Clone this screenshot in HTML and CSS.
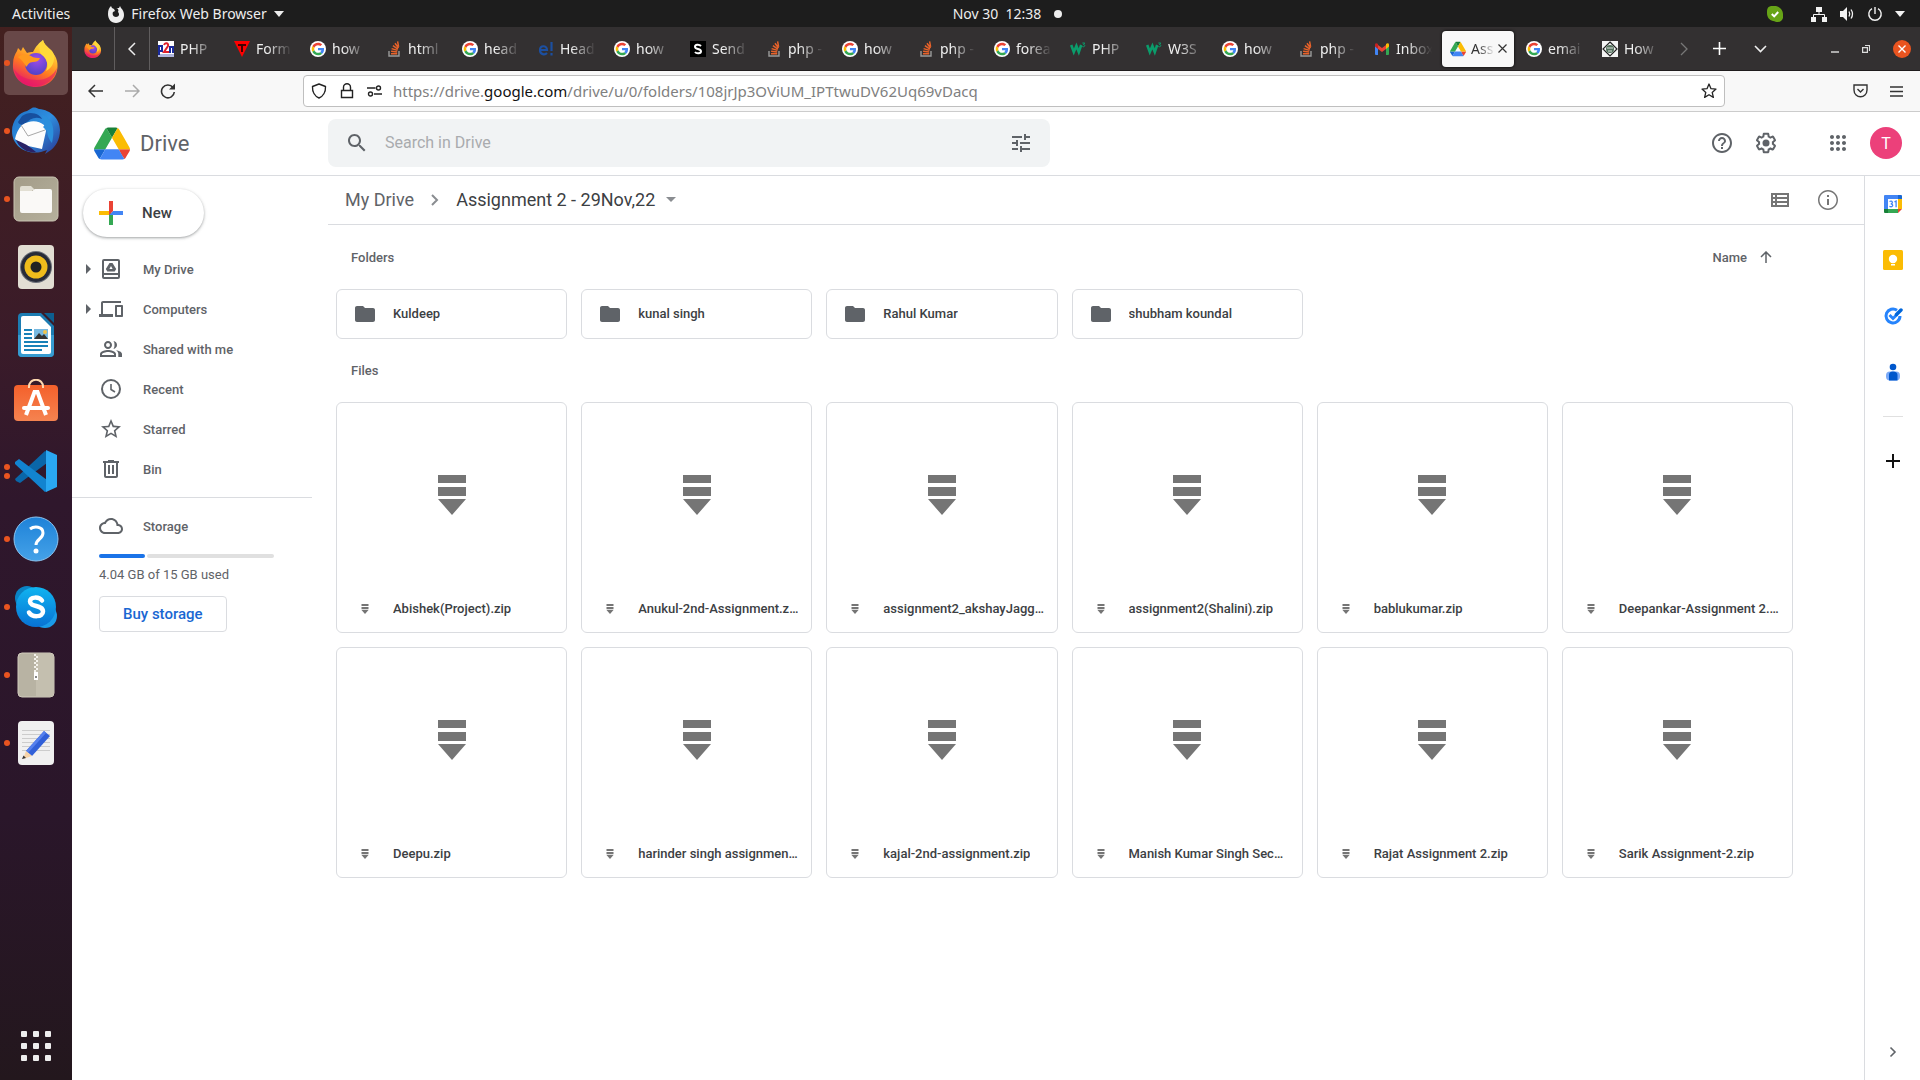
FILE: index.html
```
<!DOCTYPE html>
<html lang="en">
<head>
<meta charset="utf-8">
<title>Assignment 2 - 29Nov,22 - Google Drive</title>
<meta name="viewport" content="width=device-width, initial-scale=1">
<link rel="stylesheet" href="styles.css">
</head>
<body>
<svg class="defs" aria-hidden="true">
  <defs>
    <linearGradient id="fx-body" x1="0.8" y1="0" x2="0.3" y2="1"><stop offset="0" stop-color="#fff44f"/><stop offset=".3" stop-color="#ffbd2e"/><stop offset=".6" stop-color="#ff7a20"/><stop offset="1" stop-color="#e5126d"/></linearGradient>
    <radialGradient id="fx-core" cx=".55" cy=".3" r=".75"><stop offset="0" stop-color="#a04bea"/><stop offset="1" stop-color="#4a42c4"/></radialGradient>
    <linearGradient id="tb" x1="0" y1="0" x2="1" y2="1"><stop offset="0" stop-color="#1f6fc4"/><stop offset=".5" stop-color="#2e8fe0"/><stop offset="1" stop-color="#2a3590"/></linearGradient>
    <linearGradient id="orange" x1="0" y1="0" x2="0" y2="1"><stop offset="0" stop-color="#f4602b"/><stop offset="1" stop-color="#f58350"/></linearGradient>
    <linearGradient id="blue" x1="0" y1="0" x2="0" y2="1"><stop offset="0" stop-color="#1e82d8"/><stop offset="1" stop-color="#45a2e8"/></linearGradient>
    <linearGradient id="skype" x1="0" y1="0" x2="0" y2="1"><stop offset="0" stop-color="#10b4f0"/><stop offset="1" stop-color="#0872d4"/></linearGradient>
    <linearGradient id="taupe" x1="0" y1="0" x2="1" y2="1"><stop offset="0" stop-color="#a39c88"/><stop offset="1" stop-color="#b5b09c"/></linearGradient>
  </defs>
  <symbol id="i-firefox" viewBox="0 0 48 48">
    <path fill="url(#fx-body)" d="M31 1c1 5 4 7 7 11 4 2 6 6 7 10 3 14-7 26-21 26S0 38 1 25c0-6 2-10 4-13l1-3 3 3 2-4 4 6c2-1 4-1 6-1 3-6 6-9 10-12z"/>
    <path fill="#e5126d" opacity=".55" d="M2 30c3 11 12 17 22 17s20-7 21-18c-4 8-11 12-20 12S7 38 2 30z"/>
    <circle cx="24" cy="25" r="11" fill="url(#fx-core)"/>
    <path fill="#ff9a1f" d="M6 18c5-3 9-3 13-1 3 2 6 2 9 2-1 3-4 4-7 4-4 0-5 3-7 5-1-3-3-6-8-10z"/>
    <path fill="#ffd83a" d="M31 1c-4 5-5 11-1 15 5 4 7 10 4 16 6-3 9-9 8-16-1-6-9-8-11-15z"/>
  </symbol>
  <symbol id="i-google" viewBox="0 0 48 48">
    <circle cx="24" cy="24" r="24" fill="#fff"/>
    <g transform="translate(5 5) scale(.79)">
      <path fill="#EA4335" d="M24 9.5c3.54 0 6.71 1.22 9.21 3.6l6.85-6.85C35.9 2.38 30.47 0 24 0 14.62 0 6.51 5.38 2.56 13.22l7.98 6.19C12.43 13.72 17.74 9.5 24 9.5z"/>
      <path fill="#4285F4" d="M46.98 24.55c0-1.57-.15-3.09-.38-4.55H24v9.02h12.94c-.58 2.96-2.26 5.48-4.78 7.18l7.73 6c4.51-4.18 7.09-10.36 7.09-17.65z"/>
      <path fill="#FBBC05" d="M10.53 28.59c-.48-1.45-.76-2.99-.76-4.59s.27-3.14.76-4.59l-7.98-6.19C.92 16.46 0 20.12 0 24c0 3.88.92 7.54 2.56 10.78l7.97-6.19z"/>
      <path fill="#34A853" d="M24 48c6.48 0 11.93-2.13 15.89-5.81l-7.73-6c-2.15 1.45-4.92 2.3-8.16 2.3-6.26 0-11.57-4.22-13.47-9.91l-7.98 6.19C6.51 42.62 14.62 48 24 48z"/>
    </g>
  </symbol>
  <symbol id="i-stack" viewBox="0 0 16 16">
    <path fill="none" stroke="#9b9b9b" stroke-width="1.4" d="M3 10v5h10v-5"/>
    <path fill="none" stroke="#e8622a" stroke-width="1.5" d="M5 12.8h6.2M5.1 10.3l6.1.7M5.6 7.6l5.9 1.8M6.9 4.7l5 3.4M9 2.2l3.5 4.8M11.6.4l1 5.4"/>
  </symbol>
  <symbol id="i-drive" viewBox="0 0 87.3 78">
    <path fill="#1967d2" d="M6.6 66.85l3.85 6.65c.8 1.4 1.95 2.5 3.3 3.3L27.5 53H0c0 1.55.4 3.1 1.2 4.5z"/>
    <path fill="#34a853" d="M43.65 25L29.9 1.2c-1.35.8-2.5 1.9-3.3 3.3l-25.4 44A9.06 9.06 0 0 0 0 53h27.5z"/>
    <path fill="#ea4335" d="M73.55 76.8c1.35-.8 2.5-1.9 3.3-3.3l1.6-2.75 7.65-13.25c.8-1.4 1.2-2.95 1.2-4.5H59.8l5.85 11.5z"/>
    <path fill="#188038" d="M43.65 25L57.4 1.2C56.05.4 54.5 0 52.9 0H34.4c-1.6 0-3.15.45-4.5 1.2z"/>
    <path fill="#4285f4" d="M59.8 53H27.5L13.75 76.8c1.35.8 2.9 1.2 4.5 1.2h50.8c1.6 0 3.15-.45 4.5-1.2z"/>
    <path fill="#fbbc04" d="M73.4 26.5l-12.7-22c-.8-1.4-1.95-2.5-3.3-3.3L43.65 25 59.8 53h27.45c0-1.55-.4-3.1-1.2-4.5z"/>
  </symbol>
  <symbol id="i-w3" viewBox="0 0 16 16">
    <path fill="none" stroke="#0b9c6b" stroke-width="2.6" d="M1.2 4l2.6 7L6.4 5l2.4 6 2.4-7"/>
    <path fill="none" stroke="#0b9c6b" stroke-width="1" d="M12.4 2h2.4l-1.3 1.5c1.7 0 1.7 2.3-.2 2.3l-1-.3"/>
  </symbol>
  <symbol id="i-zip" viewBox="0 0 28 40">
    <path fill="#757575" d="M0 0h28v8H0zM0 12h28v9H0zM0 24h28L14 40z"/>
  </symbol>
  <symbol id="i-folder" viewBox="0 0 24 24">
    <path fill="#5f6368" d="M10 4H4c-1.1 0-1.99.9-1.99 2L2 18c0 1.1.9 2 2 2h16c1.1 0 2-.9 2-2V8c0-1.1-.9-2-2-2h-8l-2-2z"/>
  </symbol>
</svg>

<header class="topbar">
  <div class="topbar-left">
    <button class="plain">Activities</button>
    <button class="plain app-menu">
      <svg width="16" height="18" viewBox="0 0 16 18"><path fill="#eee" d="M8 3c2 0 3 2 2 4 2 2 1 5-2 5s-4-3-3-5l2-1-1-2-2-1-1-2C1 3 0 5 0 9c0 5 3 9 8 9s8-4 8-8c0-3-1-5-3-7l-1-2-1 2z"/></svg>
      <span>Firefox Web Browser</span>
      <svg width="10" height="6" viewBox="0 0 10 6"><path fill="#eee" d="M0 0h10L5 6z"/></svg>
    </button>
  </div>
  <button class="plain clock"><span>Nov 30&nbsp; 12:38</span><i class="dot"></i></button>
  <div class="topbar-right">
    <svg class="tray" width="16" height="16" viewBox="0 0 16 16"><path fill="#67a417" d="M4 0c2-1 3 0 5 0 4 1 7 4 7 8 1 4-1 8-5 8-2 0-3-.5-5-1-4-1-6-4-6-8C0 4 0 1 4 0z"/><path fill="none" stroke="#fff" stroke-width="2" d="M4.800 8l2.400 2.400 4-4.400"/></svg>
    <svg width="16" height="16" viewBox="0 0 16 16"><path fill="#f2f2f2" d="M5 1h6v5H5zM0 11h5v5H0zM11 11h5v5h-5z"/><path fill="none" stroke="#f2f2f2" d="M8 5v3.500M2.500 11V8.500h11V11"/></svg>
    <svg width="16" height="16" viewBox="0 0 16 16"><path fill="#f2f2f2" d="M1 5h3l4-4v14l-4-4H1z"/><path fill="none" stroke="#f2f2f2" stroke-width="1.300" d="M10 5.500q1.500 2.500 0 5M12 3.500q3 4.500 0 9"/></svg>
    <svg width="16" height="16" viewBox="0 0 16 16"><path fill="none" stroke="#f2f2f2" stroke-width="1.400" d="M8 1v7M5 2.600a6.200 6.200 0 1 0 6 0"/></svg>
    <svg width="10" height="6" viewBox="0 0 10 6"><path fill="#f2f2f2" d="M0 0h10L5 6z"/></svg>
  </div>
</header>

<div class="desktop">
<nav class="dock" aria-label="Dock">
  <button class="dock-item active one" aria-label="Firefox"><svg width="48" height="48"><use href="#i-firefox"/></svg></button>
  <button class="dock-item one" aria-label="Thunderbird"><svg width="48" height="48" viewBox="0 0 48 48">
    <path fill="url(#tb)" d="M20 1c2-1 5 0 7 1 12 1 21 10 21 21 0 10-5 17-9 20l-6 4 2-4-6 2C14 48 0 39 0 24 0 13 8 5 15 4z"/>
    <path fill="#174f9e" d="M10 9c8-6 18-2 20 3-7-3-12 0-16 4-3 3-7 2-8-1z"/>
    <path fill="#fdfdfd" d="M10 18c9-6 17-4 22 0l2 6-4 18C21 40 11 39 3 32c1-5 3-10 7-14z"/>
    <path fill="none" stroke="#a8a8a8" d="M9 18l7 11 17-6"/>
    <path fill="#2a2266" d="M4 33c6 2 14 6 20 12C15 46 7 41 4 33z"/><path fill="#2b8fdc" d="M30 8c14 4 12 20 10 28-3-3-5-9-5-12l-4-4 2-2z"/></svg></button>
  <button class="dock-item one" aria-label="Files"><svg width="48" height="48" viewBox="0 0 48 48">
    <rect x="2" y="2" width="44" height="44" rx="5" fill="url(#taupe)" stroke="#c9c4b2"/>
    <path fill="#e2dfd3" d="M8 13a2 2 0 0 1 2-2h9l4 4h-3v8H8z"/><path fill="#faf9f7" d="M8 16h12l3-2h15a2 2 0 0 1 2 2v20a2 2 0 0 1-2 2H10a2 2 0 0 1-2-2z"/></svg></button>
  <button class="dock-item" aria-label="Rhythmbox"><svg width="48" height="48" viewBox="0 0 48 48">
    <rect x="6" y="2" width="36" height="44" rx="4" fill="#e2ded3"/><circle cx="24" cy="24" r="16" fill="#6b6f78"/><circle cx="24" cy="24" r="15" fill="#272b38"/><circle cx="24" cy="24" r="11.500" fill="#efbc1c"/><circle cx="24" cy="24" r="5.500" fill="#222"/></svg></button>
  <button class="dock-item" aria-label="LibreOffice Writer"><svg width="48" height="48" viewBox="0 0 48 48">
    <path fill="#1c7cb2" d="M10 2h19l13 13v27a4 4 0 0 1-4 4H10a4 4 0 0 1-4-4V6a4 4 0 0 1 4-4z"/><path fill="#369bd0" d="M6 24h36v18a4 4 0 0 1-4 4H10a4 4 0 0 1-4-4z"/><path fill="#0d5f90" d="M32 2h10v10z"/>
    <path fill="#fff" d="M11 5h17l11 11v25a2 2 0 0 1-2 2H11a2 2 0 0 1-2-2V7a2 2 0 0 1 2-2z"/>
    <path stroke="#1881b8" stroke-width="2" d="M12 19h8M12 23h8M12 27h8M12 31h24M12 35h24M12 39h18"/><path fill="#78b9e0" d="M22 18h14v10H22z"/><path fill="#333" d="M22 28l5-6 3 3 2-2 4 5z"/><circle cx="33" cy="21" r="2" fill="#f3c44a"/></svg></button>
  <button class="dock-item" aria-label="Ubuntu Software"><svg width="48" height="48" viewBox="0 0 48 48">
    <rect x="2" y="6" width="44" height="36" rx="4" fill="url(#orange)"/><path fill="none" stroke="#ffd9b0" stroke-width="2" d="M17 9c-1-11 15-11 14 0"/>
    <path fill="none" stroke="#fff" stroke-width="4" d="M14 36l8.500-23h3L34 36"/><path stroke="#fff" stroke-width="4" stroke-linecap="round" d="M12 29h24"/></svg></button>
  <button class="dock-item two" aria-label="Visual Studio Code"><svg width="48" height="48" viewBox="0 0 48 48">
    <path fill="#0a66a8" d="M4 34l-1-2L33 4l2 1v11L8 36z"/><path fill="#1284d0" d="M3 15l4-3 28 21v11l-2 1L3 17z"/><path fill="#2aa8f2" d="M34 3l11 5v32l-11 5z"/></svg></button>
  <button class="dock-item one" aria-label="Help"><svg width="48" height="48" viewBox="0 0 48 48">
    <circle cx="24" cy="24" r="22" fill="url(#blue)" stroke="#8cc4f0"/><path fill="none" stroke="#fff" stroke-width="3" d="M18 14c4-3 13-3 13 4 0 6-7 6-7 12"/><circle cx="24" cy="36" r="2.500" fill="#fff"/></svg></button>
  <button class="dock-item one" aria-label="Skype"><svg width="48" height="48" viewBox="0 0 48 48">
    <circle cx="15" cy="15" r="12" fill="#0a83c4"/><circle cx="33" cy="33" r="12" fill="#1a9be8"/><circle cx="24" cy="24" r="20" fill="url(#skype)"/>
    <path fill="none" stroke="#fff" stroke-width="4.500" stroke-linecap="round" d="M30 17.500c-3-4-12-4-12 1 0 6 13 3 13 10 0 6-11 6-14 1"/></svg></button>
  <button class="dock-item one" aria-label="Archive Manager"><svg width="48" height="48" viewBox="0 0 48 48">
    <rect x="6" y="2" width="36" height="44" rx="4" fill="#b8b3a3" stroke="#d0cbbc"/><path fill="#c4bfaf" d="M24 3h17v42H24z"/><path stroke="#f4f2ec" stroke-width="2" stroke-dasharray="2 2" d="M23 3v20"/><path stroke="#f4f2ec" stroke-width="2" stroke-dasharray="2 2" stroke-dashoffset="2" d="M25 3v20"/><path fill="#fff" d="M22 21h4v8h-4z"/><path fill="#888" d="M23 25h2v2h-2z"/></svg></button>
  <button class="dock-item one" aria-label="Text Editor"><svg width="48" height="48" viewBox="0 0 48 48">
    <rect x="6" y="2" width="36" height="44" rx="4" fill="#f0f0f0"/><path stroke="#ccc" d="M10 11.500h28M10 15.500h28M10 19.500h28M10 23.500h28M10 27.500h28M10 31.500h28"/>
    <path fill="#3160d8" d="M32 12l6 5-18 20-6-5z"/><path fill="#5580ee" d="M32 12l2 2-18 20-2-2z"/><path fill="#f6d3a8" d="M14 32l6 5-9 3z"/><path fill="#333" d="M11.500 36.500l2.500 2.500-4 1z"/></svg></button>
  <button class="dock-item apps" aria-label="Show Applications"><svg width="30" height="30" viewBox="0 0 30 30"><g fill="#eee"><rect width="6" height="6" rx="1"/><rect x="12" width="6" height="6" rx="1"/><rect x="24" width="6" height="6" rx="1"/><rect y="12" width="6" height="6" rx="1"/><rect x="12" y="12" width="6" height="6" rx="1"/><rect x="24" y="12" width="6" height="6" rx="1"/><rect y="24" width="6" height="6" rx="1"/><rect x="12" y="24" width="6" height="6" rx="1"/><rect x="24" y="24" width="6" height="6" rx="1"/></g></svg></button>
</nav>

<div class="browser">
  <div class="tabstrip">
    <button class="pinned" aria-label="Firefox View"><svg width="18" height="18"><use href="#i-firefox"/></svg></button>
    <button class="scroll-left" aria-label="Scroll tabs left"><svg width="8" height="14" viewBox="0 0 8 14"><path fill="none" stroke="#eee" stroke-width="1.500" d="M7 1L1 7l6 6"/></svg></button>
    <div class="tabs" role="tablist">
      <button class="tab" role="tab"><svg width="16" height="16" viewBox="0 0 16 16"><path fill="#fff" d="M0 0h16v16H0z"/><path fill="none" stroke="#1a2a9c" stroke-width="2" d="M1 14V5h3v5H1M12 12V6h3v6"/><path fill="none" stroke="#e0202c" stroke-width="2" d="M6 4c1-3 5-2 4 1l-4 6h5"/><path fill="#1a2a9c" d="M0 13h16v3H0z" opacity=".35"/></svg><span>PHP</span></button>
      <button class="tab" role="tab"><svg width="16" height="16" viewBox="0 0 16 16"><path fill="#f00" d="M0 0h16L8 16z"/><path stroke="#400" stroke-width="2" d="M4 4h8M8 4v7"/></svg><span>Form</span></button>
      <button class="tab" role="tab"><svg width="16" height="16"><use href="#i-google"/></svg><span>how</span></button>
      <button class="tab" role="tab"><svg width="16" height="16"><use href="#i-stack"/></svg><span>html</span></button>
      <button class="tab" role="tab"><svg width="16" height="16"><use href="#i-google"/></svg><span>head</span></button>
      <button class="tab" role="tab"><svg width="16" height="16" viewBox="0 0 16 16"><path fill="none" stroke="#1c4fa0" stroke-width="2.200" d="M2 9h7c0-5-7-5-7 0 0 5 5 5 7 3M13.500 1v9M13.500 12v2.500"/></svg><span>Head</span></button>
      <button class="tab" role="tab"><svg width="16" height="16"><use href="#i-google"/></svg><span>how</span></button>
      <button class="tab" role="tab"><svg width="16" height="16" viewBox="0 0 16 16"><path d="M0 0h16v16H0z"/><path fill="none" stroke="#fff" stroke-width="2" d="M11 5C9 3 5 3.500 5 5.700c0 3 6 1.600 6 4.600 0 2.500-4.500 2.700-6 .7"/></svg><span>Send</span></button>
      <button class="tab" role="tab"><svg width="16" height="16"><use href="#i-stack"/></svg><span>php -</span></button>
      <button class="tab" role="tab"><svg width="16" height="16"><use href="#i-google"/></svg><span>how</span></button>
      <button class="tab" role="tab"><svg width="16" height="16"><use href="#i-stack"/></svg><span>php -</span></button>
      <button class="tab" role="tab"><svg width="16" height="16"><use href="#i-google"/></svg><span>forea</span></button>
      <button class="tab" role="tab"><svg width="16" height="16"><use href="#i-w3"/></svg><span>PHP</span></button>
      <button class="tab" role="tab"><svg width="16" height="16"><use href="#i-w3"/></svg><span>W3S</span></button>
      <button class="tab" role="tab"><svg width="16" height="16"><use href="#i-google"/></svg><span>how</span></button>
      <button class="tab" role="tab"><svg width="16" height="16"><use href="#i-stack"/></svg><span>php -</span></button>
      <button class="tab" role="tab"><svg width="16" height="16" viewBox="0 0 16 16"><path fill="#4285f4" d="M1 4l3 2v8H2a1 1 0 0 1-1-1z"/><path fill="#34a853" d="M12 6l3-2v9a1 1 0 0 1-1 1h-2z"/><path fill="#ea4335" d="M4 4l4 3 4-3v4l-4 3-4-3z"/><path fill="#c5221f" d="M1 4c0-2 1.500-2 3-1v5L1 5.500z"/><path fill="#fbbc04" d="M15 4c0-2-1.500-2-3-1v5l3-2.500z"/></svg><span>Inbox</span></button>
      <button class="tab selected" role="tab" aria-selected="true"><svg width="16" height="16"><use href="#i-drive"/></svg><span>Ass</span><svg class="close" width="9" height="9" viewBox="0 0 9 9"><path stroke="#333" stroke-width="1.200" d="M.5.5l8 8M8.500.5l-8 8"/></svg></button>
      <button class="tab" role="tab"><svg width="16" height="16"><use href="#i-google"/></svg><span>emai</span></button>
      <button class="tab" role="tab"><svg width="16" height="16" viewBox="0 0 16 16"><path fill="#f4f4f4" d="M0 0h16v16H0z"/><path fill="none" stroke="#222" stroke-width="1.200" d="M8 1l7 7-7 7-7-7z"/><circle cx="8" cy="8" r="4" fill="#52725c"/><path stroke="#ddd" d="M5 7h6M6 10h4"/></svg><span>How</span></button>
    </div>
    <button class="icon-btn scroll-right" aria-label="Scroll tabs right"><svg width="8" height="14" viewBox="0 0 8 14"><path fill="none" stroke="#777" stroke-width="1.300" d="M1 1l6 6-6 6"/></svg></button>
    <button class="icon-btn" aria-label="New tab"><svg width="13" height="13" viewBox="0 0 13 13"><path stroke="#fff" stroke-width="1.600" d="M6.500 0v13M0 6.500h13"/></svg></button>
    <button class="icon-btn" aria-label="List all tabs"><svg width="13" height="8" viewBox="0 0 13 8"><path fill="none" stroke="#eee" stroke-width="1.600" d="M1 1l5.500 5.500L12 1"/></svg></button>
    <div class="window-controls">
      <button class="plain" aria-label="Minimise"><svg width="8" height="8" viewBox="0 0 8 8"><path stroke="#fff" stroke-width="1.200" d="M0 7h8"/></svg></button>
      <button class="plain" aria-label="Restore"><svg width="8" height="8" viewBox="0 0 8 8"><path fill="none" stroke="#ddd" stroke-width="1.200" d="M.6 2.600h4.800v4.800H.6zM3 .5h4.500V6"/></svg></button>
      <button class="plain close-window" aria-label="Close"><svg width="8" height="8" viewBox="0 0 8 8"><path stroke="#fff" stroke-width="1.400" d="M.5.5l7 7M7.500.5l-7 7"/></svg></button>
    </div>
  </div>

  <div class="navbar">
    <button class="icon-btn" aria-label="Back"><svg width="16" height="14" viewBox="0 0 16 14"><path fill="none" stroke="#333" stroke-width="1.500" d="M15 7H1.500M7 1L1 7l6 6"/></svg></button>
    <button class="icon-btn" aria-label="Forward"><svg width="16" height="14" viewBox="0 0 16 14"><path fill="none" stroke="#aaa" stroke-width="1.500" d="M1 7h13.500M9 1l6 6-6 6"/></svg></button>
    <button class="icon-btn" aria-label="Reload"><svg width="16" height="16" viewBox="0 0 16 16"><path fill="none" stroke="#333" stroke-width="1.600" d="M13 4.500A6.400 6.400 0 1 0 14.300 9"/><path fill="#333" d="M15 .5v6H9z"/></svg></button>
    <div class="urlbar">
      <div class="site-info">
        <svg width="16" height="16" viewBox="0 0 16 16"><path fill="none" stroke="#222" stroke-width="1.400" stroke-linejoin="round" d="M8 1L1.500 3.500C1.200 9 4 13.500 8 15c4-1.500 6.800-6 6.500-11.500z"/></svg>
        <svg width="14" height="16" viewBox="0 0 14 16"><path fill="none" stroke="#222" stroke-width="1.400" d="M1.500 7.500h11v7h-11zM3.500 7.500V4.200a3.500 3.500 0 0 1 7 0v3.300"/></svg>
        <svg width="16" height="12" viewBox="0 0 16 12"><path fill="none" stroke="#222" stroke-width="1.400" d="M0 3h8.500M7 9h8"/><circle cx="11.500" cy="3" r="2" fill="none" stroke="#222" stroke-width="1.400"/><circle cx="3.500" cy="9" r="2" fill="none" stroke="#222" stroke-width="1.400"/></svg>
      </div>
      <div class="url" role="textbox" contenteditable="true" aria-label="Address" spellcheck="false">https://drive.<b>google.com</b>/drive/u/0/folders/108jrJp3OViUM_IPTtwuDV62Uq69vDacq</div>
      <svg width="16" height="16" viewBox="0 0 16 16"><path fill="none" stroke="#222" stroke-width="1.300" stroke-linejoin="round" d="M8 1l2 4.700 5 .4-3.800 3.300 1.200 5L8 11.700l-4.400 2.700 1.200-5L1 6.100l5-.4z"/></svg>
    </div>
    <button class="icon-btn" aria-label="Save to Pocket"><svg width="15" height="14" viewBox="0 0 15 14"><path fill="none" stroke="#333" stroke-width="1.400" d="M1 1h13v5c0 9-13 9-13 0zM4.500 5l3 3 3-3"/></svg></button>
    <button class="icon-btn" aria-label="Menu"><svg width="13" height="11" viewBox="0 0 13 11"><path stroke="#333" stroke-width="1.300" d="M0 1h13M0 5.500h13M0 10h13"/></svg></button>
  </div>

  <div class="page">
    <header class="drive-header">
      <a class="brand" href="#"><svg width="36" height="33"><use href="#i-drive"/></svg><span>Drive</span></a>
      <form class="search" role="search">
        <svg width="24" height="24" viewBox="0 0 24 24"><path fill="#5f6368" d="M15.500 14h-.79l-.28-.27C15.410 12.590 16 11.110 16 9.500 16 5.910 13.090 3 9.500 3S3 5.910 3 9.500 5.910 16 9.500 16c1.610 0 3.090-.59 4.230-1.570l.27.28v.79l5 4.990L20.490 19l-4.990-5zm-6 0C7.010 14 5 11.990 5 9.500S7.010 5 9.500 5 14 7.010 14 9.500 11.990 14 9.500 14z"/></svg>
        <input type="text" placeholder="Search in Drive" aria-label="Search in Drive">
        <button class="plain" type="button" aria-label="Search options"><svg width="24" height="24" viewBox="0 0 24 24"><path fill="#5f6368" d="M3 17v2h6v-2H3zM3 5v2h10V5H3zm10 16v-2h8v-2h-8v-2h-2v6h2zM7 9v2H3v2h4v2h2V9H7zm14 4v-2H11v2h10zm-6-4h2V7h4V5h-4V3h-2v6z"/></svg></button>
      </form>
      <div class="header-actions">
        <button class="plain" aria-label="Support"><svg width="24" height="24" viewBox="0 0 24 24"><path fill="#5f6368" d="M11 18h2v-2h-2v2zm1-16C6.480 2 2 6.480 2 12s4.480 10 10 10 10-4.480 10-10S17.520 2 12 2zm0 18c-4.410 0-8-3.590-8-8s3.590-8 8-8 8 3.590 8 8-3.590 8-8 8zm0-14c-2.210 0-4 1.790-4 4h2c0-1.100.9-2 2-2s2 .9 2 2c0 2-3 1.750-3 5h2c0-2.250 3-2.500 3-5 0-2.210-1.790-4-4-4z"/></svg></button>
        <button class="plain" aria-label="Settings"><svg width="24" height="24" viewBox="0 0 24 24"><path fill="#5f6368" d="M13.850 22.250h-3.700c-.74 0-1.360-.54-1.450-1.270l-.27-1.890c-.27-.14-.53-.29-.79-.46l-1.800.72c-.7.26-1.470-.03-1.810-.65L2.200 15.530c-.35-.66-.2-1.440.36-1.880l1.530-1.190c-.01-.15-.02-.3-.02-.46 0-.15.01-.31.02-.46l-1.520-1.190c-.59-.45-.74-1.260-.37-1.880l1.850-3.190c.34-.62 1.110-.9 1.790-.63l1.810.73c.26-.17.52-.32.78-.46l.27-1.910c.09-.7.71-1.250 1.440-1.250h3.700c.74 0 1.360.54 1.450 1.270l.27 1.890c.27.14.53.29.79.46l1.800-.72c.71-.26 1.480.03 1.820.65l1.840 3.180c.36.66.2 1.440-.36 1.880l-1.520 1.190c.01.15.02.3.02.46s-.01.31-.02.46l1.520 1.190c.56.45.72 1.230.37 1.860l-1.860 3.220c-.34.62-1.110.9-1.800.63l-1.800-.72c-.26.17-.52.32-.78.46l-.27 1.910c-.1.68-.72 1.220-1.460 1.220zm-3.230-2h2.760l.37-2.550.53-.22c.44-.18.88-.44 1.340-.78l.45-.34 2.380.96 1.380-2.400-2.030-1.580.07-.56c.03-.26.06-.51.06-.78s-.03-.53-.06-.78l-.07-.56 2.030-1.580-1.390-2.400-2.390.96-.45-.35c-.42-.32-.87-.58-1.330-.77l-.52-.22-.37-2.550h-2.760l-.37 2.550-.53.21c-.44.19-.88.44-1.340.79l-.45.33-2.380-.95-1.390 2.390 2.030 1.580-.07.56a7 7 0 0 0-.06.79c0 .26.02.53.06.78l.07.56-2.030 1.580 1.380 2.400 2.390-.96.45.35c.43.33.86.58 1.330.77l.53.22.38 2.550z"/><circle cx="12" cy="12" r="3.500" fill="#5f6368"/></svg></button>
        <button class="plain google-apps" aria-label="Google apps"><svg width="24" height="24" viewBox="0 0 24 24"><path fill="#5f6368" d="M6 8c1.100 0 2-.9 2-2s-.9-2-2-2-2 .9-2 2 .9 2 2 2zm6 12c1.100 0 2-.9 2-2s-.9-2-2-2-2 .9-2 2 .9 2 2 2zm-6 0c1.100 0 2-.9 2-2s-.9-2-2-2-2 .9-2 2 .9 2 2 2zm0-6c1.100 0 2-.9 2-2s-.9-2-2-2-2 .9-2 2 .9 2 2 2zm6 0c1.100 0 2-.9 2-2s-.9-2-2-2-2 .9-2 2 .9 2 2 2zm4-8c0 1.100.9 2 2 2s2-.9 2-2-.9-2-2-2-2 .9-2 2zm-4 2c1.100 0 2-.9 2-2s-.9-2-2-2-2 .9-2 2 .9 2 2 2zm6 6c1.100 0 2-.9 2-2s-.9-2-2-2-2 .9-2 2 .9 2 2 2zm0 6c1.100 0 2-.9 2-2s-.9-2-2-2-2 .9-2 2 .9 2 2 2z"/></svg></button>
        <button class="plain avatar" aria-label="Account">T</button>
      </div>
    </header>

    <div class="drive-body">
      <aside class="sidebar">
        <button class="new-btn"><svg width="24" height="24" viewBox="0 0 24 24"><path fill="#34a853" d="M10 12h4v12h-4z"/><path fill="#4285f4" d="M10 14l4-4h10v4z"/><path fill="#fbbc04" d="M0 10h10v4H0z"/><path fill="#ea4335" d="M10 0h4v10l-4 4z"/></svg><span>New</span></button>
        <nav class="side-nav">
          <a href="#"><svg class="caret" width="6" height="10" viewBox="0 0 6 10"><path fill="#5f6368" d="M0 0l5 5-5 5z"/></svg><svg width="24" height="24" viewBox="0 0 24 24"><path fill="#5f6368" fill-rule="evenodd" d="M5 2h14a2 2 0 0 1 2 2v16a2 2 0 0 1-2 2H5a2 2 0 0 1-2-2V4a2 2 0 0 1 2-2zm0 2v12h14V4zm0 14v2h14v-2zM10.500 6h3l3.700 6-1.500 2.500H8.300L6.800 12zm1.500 3l-1.600 3h3.200z"/></svg><span>My Drive</span></a>
          <a href="#"><svg class="caret" width="6" height="10" viewBox="0 0 6 10"><path fill="#5f6368" d="M0 0l5 5-5 5z"/></svg><svg width="24" height="24" viewBox="0 0 24 24"><path fill="#5f6368" d="M4 6h18V4H4c-1.100 0-2 .9-2 2v11H0v3h14v-3H4V6zm19 2h-6c-.55 0-1 .45-1 1v10c0 .55.45 1 1 1h6c.55 0 1-.45 1-1V9c0-.55-.45-1-1-1zm-1 10h-4v-8h4v8z"/></svg><span>Computers</span></a>
          <a href="#"><i class="caret"></i><svg width="24" height="24" viewBox="0 0 24 24"><path fill="#5f6368" d="M9 12c2.210 0 4-1.790 4-4s-1.790-4-4-4-4 1.790-4 4 1.790 4 4 4zm0-6a2 2 0 1 1 0 4 2 2 0 0 1 0-4zM9 13c-2.670 0-8 1.340-8 4v3h16v-3c0-2.660-5.330-4-8-4zm6 5H3v-1c.2-.71 3.300-2 6-2s5.800 1.290 6 2zM14.500 11.900c1.980-.24 3.500-1.900 3.500-3.900s-1.520-3.660-3.500-3.900A6 6 0 0 1 15.500 8a6 6 0 0 1-1 3.900zM17 13.200c1.400.9 2.300 2.100 2.300 3.800v3H23v-3c0-2-2.900-3.300-6-3.800z"/></svg><span>Shared with me</span></a>
          <a href="#"><i class="caret"></i><svg width="24" height="24" viewBox="0 0 24 24"><circle cx="12" cy="12" r="9" fill="none" stroke="#5f6368" stroke-width="2"/><path fill="none" stroke="#5f6368" stroke-width="1.600" d="M12 7v5.500l4 2.500"/></svg><span>Recent</span></a>
          <a href="#"><i class="caret"></i><svg width="24" height="24" viewBox="0 0 24 24"><path fill="#5f6368" d="M22 9.240l-7.190-.62L12 2 9.190 8.630 2 9.240l5.460 4.730L5.820 21 12 17.270 18.180 21l-1.630-7.030L22 9.240zM12 15.400l-3.760 2.270 1-4.280-3.320-2.880 4.380-.38L12 6.100l1.710 4.040 4.380.38-3.320 2.880 1 4.280L12 15.400z"/></svg><span>Starred</span></a>
          <a href="#"><i class="caret"></i><svg width="24" height="24" viewBox="0 0 24 24"><path fill="#5f6368" d="M15 4V3H9v1H4v2h1v13c0 1.100.9 2 2 2h10c1.100 0 2-.9 2-2V6h1V4h-5zm2 15H7V6h10v13zM9 8h2v9H9zm4 0h2v9h-2z"/></svg><span>Bin</span></a>
        </nav>
        <section class="storage">
          <a class="storage-link" href="#"><svg width="24" height="24" viewBox="0 0 24 24"><path fill="#5f6368" d="M19.350 10.040C18.670 6.590 15.640 4 12 4 9.110 4 6.600 5.640 5.350 8.040 2.340 8.360 0 10.910 0 14c0 3.310 2.690 6 6 6h13c2.760 0 5-2.240 5-5 0-2.640-2.050-4.780-4.650-4.960zM19 18H6c-2.210 0-4-1.790-4-4s1.790-4 4-4h.71C7.370 7.690 9.480 6 12 6c3.040 0 5.500 2.460 5.500 5.500v.5H19c1.660 0 3 1.340 3 3s-1.340 3-3 3z"/></svg><span>Storage</span></a>
          <div class="meter"><i class="used" style="width:26%"></i><i class="free"></i></div>
          <p>4.04 GB of 15 GB used</p>
          <button class="buy">Buy storage</button>
        </section>
      </aside>

      <main>
        <div class="crumbs">
          <a href="#">My Drive</a>
          <svg width="8" height="12" viewBox="0 0 8 12"><path fill="none" stroke="#8a8d91" stroke-width="2" d="M1 1l5 5-5 5"/></svg>
          <button class="plain current">Assignment 2 - 29Nov,22 <svg width="10" height="5" viewBox="0 0 10 5"><path fill="#8a8d91" d="M0 0h10L5 5z"/></svg></button>
          <div class="view-actions">
            <button class="plain" aria-label="List layout"><svg width="18" height="14" viewBox="0 0 18 14"><path fill="#757575" fill-rule="evenodd" d="M0 0h18v14H0zM2 2v2h2V2zm4 0v2h10V2zM2 6v2h2V6zm4 0v2h10V6zM2 10v2h2v-2zm4 0v2h10v-2z"/></svg></button>
            <button class="plain" aria-label="View details"><svg width="24" height="24" viewBox="0 0 24 24"><path fill="#757575" d="M11 7h2v2h-2zm0 4h2v6h-2zm1-9C6.480 2 2 6.480 2 12s4.480 10 10 10 10-4.480 10-10S17.520 2 12 2zm0 18.500c-4.700 0-8.500-3.800-8.500-8.500S7.300 3.500 12 3.500s8.500 3.800 8.500 8.500-3.800 8.500-8.500 8.500z"/></svg></button>
          </div>
        </div>

        <div class="section-head">
          <h2>Folders</h2>
          <button class="plain sort">Name <svg width="12" height="12" viewBox="0 0 12 12"><path fill="none" stroke="#5f6368" stroke-width="1.500" d="M6 12V1M1 6l5-5 5 5"/></svg></button>
        </div>
        <div class="grid">
          <a class="folder" href="#"><svg width="24" height="24"><use href="#i-folder"/></svg><span>Kuldeep</span></a>
          <a class="folder" href="#"><svg width="24" height="24"><use href="#i-folder"/></svg><span>kunal singh</span></a>
          <a class="folder" href="#"><svg width="24" height="24"><use href="#i-folder"/></svg><span>Rahul Kumar</span></a>
          <a class="folder" href="#"><svg width="24" height="24"><use href="#i-folder"/></svg><span>shubham koundal</span></a>
        </div>

        <div class="section-head files-head"><h2>Files</h2></div>
        <div class="grid">
          <a class="file" href="#"><div class="thumb"><svg width="28" height="40"><use href="#i-zip"/></svg></div><div class="name"><svg width="24" height="10"><use href="#i-zip"/></svg><span>Abishek(Project).zip</span></div></a>
          <a class="file" href="#"><div class="thumb"><svg width="28" height="40"><use href="#i-zip"/></svg></div><div class="name"><svg width="24" height="10"><use href="#i-zip"/></svg><span>Anukul-2nd-Assignment.z…</span></div></a>
          <a class="file" href="#"><div class="thumb"><svg width="28" height="40"><use href="#i-zip"/></svg></div><div class="name"><svg width="24" height="10"><use href="#i-zip"/></svg><span>assignment2_akshayJagg…</span></div></a>
          <a class="file" href="#"><div class="thumb"><svg width="28" height="40"><use href="#i-zip"/></svg></div><div class="name"><svg width="24" height="10"><use href="#i-zip"/></svg><span>assignment2(Shalini).zip</span></div></a>
          <a class="file" href="#"><div class="thumb"><svg width="28" height="40"><use href="#i-zip"/></svg></div><div class="name"><svg width="24" height="10"><use href="#i-zip"/></svg><span>bablukumar.zip</span></div></a>
          <a class="file" href="#"><div class="thumb"><svg width="28" height="40"><use href="#i-zip"/></svg></div><div class="name"><svg width="24" height="10"><use href="#i-zip"/></svg><span>Deepankar-Assignment 2.…</span></div></a>
          <a class="file" href="#"><div class="thumb"><svg width="28" height="40"><use href="#i-zip"/></svg></div><div class="name"><svg width="24" height="10"><use href="#i-zip"/></svg><span>Deepu.zip</span></div></a>
          <a class="file" href="#"><div class="thumb"><svg width="28" height="40"><use href="#i-zip"/></svg></div><div class="name"><svg width="24" height="10"><use href="#i-zip"/></svg><span>harinder singh assignmen…</span></div></a>
          <a class="file" href="#"><div class="thumb"><svg width="28" height="40"><use href="#i-zip"/></svg></div><div class="name"><svg width="24" height="10"><use href="#i-zip"/></svg><span>kajal-2nd-assignment.zip</span></div></a>
          <a class="file" href="#"><div class="thumb"><svg width="28" height="40"><use href="#i-zip"/></svg></div><div class="name"><svg width="24" height="10"><use href="#i-zip"/></svg><span>Manish Kumar Singh Sec…</span></div></a>
          <a class="file" href="#"><div class="thumb"><svg width="28" height="40"><use href="#i-zip"/></svg></div><div class="name"><svg width="24" height="10"><use href="#i-zip"/></svg><span>Rajat Assignment 2.zip</span></div></a>
          <a class="file" href="#"><div class="thumb"><svg width="28" height="40"><use href="#i-zip"/></svg></div><div class="name"><svg width="24" height="10"><use href="#i-zip"/></svg><span>Sarik Assignment-2.zip</span></div></a>
        </div>
      </main>

      <aside class="companion">
        <button class="plain" aria-label="Calendar"><svg width="20" height="20" viewBox="0 0 20 20"><path fill="#4285f4" d="M2 1h13v4H5v10H1V2a1 1 0 0 1 1-1z"/><path fill="#1967d2" d="M15 1h3a1 1 0 0 1 1 1v3h-4z"/><path fill="#fbbc04" d="M15 5h4v10h-4z"/><path fill="#34a853" d="M5 15h10v4H5z"/><path fill="#188038" d="M1 15h4v4H2a1 1 0 0 1-1-1z"/><path fill="#ea4335" d="M15 15h4l-4 4z"/><path fill="#fff" d="M5 5h10v10H5z"/><path fill="none" stroke="#4285f4" stroke-width="1.300" d="M6.500 7.500c3-1.500 4 1.800 1.300 2.300 3.300.4 2 3.900-1.400 2.600M11.500 7.800l1.600-.8v6.300"/></svg></button>
        <button class="plain" aria-label="Keep"><svg width="20" height="20" viewBox="0 0 20 20"><rect width="20" height="20" rx="1.500" fill="#fbbc04"/><circle cx="10" cy="9" r="4.200" fill="#fff"/><path fill="#fff" d="M8 11h4v2H8zM8 14h4v1.500H8z"/></svg></button>
        <button class="plain" aria-label="Tasks"><svg width="20" height="20" viewBox="0 0 20 20"><path fill="none" stroke="#2684fc" stroke-width="3" d="M14 4.200A7 7 0 1 0 17 10"/><path fill="none" stroke="#2684fc" stroke-width="3" d="M6.500 9l3.500 3.500L14 8.500"/><path stroke="#0066da" stroke-width="3.500" stroke-linecap="round" d="M13.500 8.500L18 4"/></svg></button>
        <button class="plain" aria-label="Contacts"><svg width="20" height="20" viewBox="0 0 20 20"><circle cx="10" cy="5" r="3.300" fill="#0057cc"/><rect x="3" y="9.500" width="14" height="9" rx="4" fill="#7baaf7"/><path fill="#0057cc" d="M6 13c0-2 1-3.500 4-3.500s4.500 1.500 4.500 3.500v5.500H6z"/></svg></button>
        <hr>
        <button class="plain" aria-label="Get add-ons"><svg width="20" height="20" viewBox="0 0 20 20"><path stroke="#111" stroke-width="2" d="M10 3v14M3 10h14"/></svg></button>
        <button class="plain hide-panel" aria-label="Hide side panel"><svg width="20" height="20" viewBox="0 0 20 20"><path fill="none" stroke="#5f6368" stroke-width="1.600" d="M7.500 5.500L12 10l-4.500 4.500"/></svg></button>
      </aside>
    </div>
  </div>
</div>
</div>
</body>
</html>
```
FILE: styles.css
```
* { box-sizing: border-box; }
body { margin: 0; min-height: 100vh; display: flex; flex-direction: column; font-family: Roboto, sans-serif; font-size: 13px; color: #5f6368; background: #fff; }
button { font: inherit; color: inherit; cursor: pointer; }
a { color: inherit; text-decoration: none; }
svg { display: block; flex: none; }
.defs { position: absolute; width: 0; height: 0; }
.plain, .icon-btn { border: 0; padding: 0; background: none; }

/* GNOME top bar */
.topbar { height: 27px; display: grid; grid-template-columns: 1fr auto 1fr; align-items: center; background: #1d1d1d; color: #eee; font-family: "Noto Sans", sans-serif; font-size: 14px; line-height: 20px; padding: 0 15px 0 12px; }
.topbar-left, .topbar-right, .app-menu, .clock { display: flex; align-items: center; }
.topbar-left { gap: 38px; }
.app-menu { gap: 7px; }
.clock { gap: 13px; padding-left: 98px; }
.dot { width: 8px; height: 8px; border-radius: 50%; background: #eee; }
.topbar-right { justify-content: flex-end; gap: 12px; }
.tray { margin-right: 16px; }

.desktop { flex: 1; display: flex; }

/* Dock */
.dock { width: 72px; flex: none; display: flex; flex-direction: column; align-items: center; padding: 2px 0 0; background: linear-gradient(#43201f, #3a1b29 30%, #2f172c 45%, #2a162a 75%, #23171d); }
.dock-item { width: 64px; height: 64px; margin: 2px 0; border: 0; padding: 0; border-radius: 5px; background: none; display: flex; align-items: center; justify-content: center; position: relative; }
.dock-item.active { background: #684848; }
.dock-item.one::before, .dock-item.two::before { content: ""; position: absolute; left: 0; top: 29px; width: 6px; height: 6px; border-radius: 50%; background: #e95420; }
.dock-item.two::before { top: 25px; box-shadow: 0 9px #e95420; }
.dock-item.apps { margin-top: auto; }

/* Browser chrome */
.browser { flex: 1; min-width: 0; display: flex; flex-direction: column; }
.tabstrip { height: 44px; display: flex; align-items: center; background: #333031; border-bottom: 1px solid #1f1c1d; color: #f0f0f0; font-family: "Noto Sans", sans-serif; font-size: 14px; padding-right: 9px; }
.pinned, .scroll-left { flex: none; align-self: stretch; display: flex; align-items: center; justify-content: center; border: 0; border-right: 1px solid #605d5e; padding: 0; background: none; }
.pinned { width: 43px; }
.scroll-left { width: 35px; }
.tabs { flex: 1; min-width: 0; display: flex; gap: 4px; overflow: hidden; padding: 4px 0; }
.tab { flex: 0 0 72px; width: 72px; min-width: 0; height: 36px; display: flex; align-items: center; gap: 6px; border: 0; border-radius: 4px; padding: 0 0 0 8px; background: none; }
.tab span { flex: 0 1 36px; min-width: 0; overflow: hidden; text-align: left; white-space: nowrap; mask-image: linear-gradient(90deg, #000 30%, transparent); }
.tab.selected { background: #f8f8f8; color: #333; gap: 5px; box-shadow: 0 0 3px #000; }
.tab.selected span { flex-basis: 24px; }
.tab.selected .close { margin-left: -2px; }
.icon-btn { width: 36px; height: 32px; display: flex; align-items: center; justify-content: center; }
.tabstrip .icon-btn { width: 41px; flex: none; }
.tabstrip .scroll-right { width: 30px; }
.window-controls { display: flex; align-items: center; gap: 23px; margin-left: 50px; }
.close-window { width: 18px; height: 18px; border-radius: 50%; background: #e95420; display: flex; align-items: center; justify-content: center; }
.navbar { height: 41px; display: flex; align-items: center; background: #f8f8f8; border-bottom: 1px solid #ccc; padding: 0 6px; }
.urlbar { flex: 1; min-width: 0; height: 32px; margin: 0 117px; display: flex; align-items: center; gap: 10px; background: #fff; border: 1px solid #bfbfbf; border-radius: 4px; padding: 0 7px; }
.site-info { display: flex; align-items: center; gap: 13px; }
.url { flex: 1; min-width: 0; white-space: nowrap; overflow: hidden; outline: 0; font-family: "Noto Sans", sans-serif; font-size: 15px; line-height: 20px; color: #808080; }
.url b { font-weight: 400; color: #111; }

/* Drive header */
.page { flex: 1; display: flex; flex-direction: column; }
.drive-header { height: 64px; display: flex; align-items: center; border-bottom: 1px solid #dadce0; padding: 0 18px 1px 22px; }
.brand { flex: 0 0 234px; display: flex; align-items: center; gap: 10px; font-size: 22px; }
.search { flex: 0 1 722px; height: 48px; display: flex; align-items: center; gap: 16px; border-radius: 8px; background: #f1f3f4; padding: 0 17px; }
.search input { flex: 1; min-width: 0; border: 0; padding: 0; outline: 0; background: none; font: 16px/24px Roboto, sans-serif; color: #202124; }
.search input::placeholder { color: #a9abae; }
.header-actions { margin-left: auto; display: flex; align-items: center; gap: 20px; }
.google-apps { margin-left: 28px; }
.avatar { width: 32px; height: 32px; border-radius: 50%; background: #ec407a; color: #fff; font-size: 16px; text-align: center; }

/* Drive body */
.drive-body { flex: 1; display: flex; }
.sidebar { flex: 0 0 256px; }
.new-btn { height: 48px; display: flex; align-items: center; gap: 19px; margin: 13px 0 12px 11px; border: 0; border-radius: 24px; padding: 0 32px 0 16px; background: #fff; box-shadow: 0 1px 2px rgba(60,64,67,.3), 0 1px 3px 1px rgba(60,64,67,.15); color: #3c4043; font-size: 15px; font-weight: 500; }
.side-nav a { height: 40px; display: flex; align-items: center; padding-left: 14px; font-weight: 500; }
.caret { width: 6px; margin-right: 7px; }
.side-nav span, .storage-link span { margin-left: 20px; }
.storage { width: 240px; margin-top: 8px; border-top: 1px solid #dadce0; padding: 8px 38px 0 27px; }
.storage-link { height: 40px; display: flex; align-items: center; font-weight: 500; }
.meter { height: 4px; display: flex; gap: 2px; margin: 8px 0 9px; }
.meter i { border-radius: 2px; }
.used { background: #1a73e8; }
.free { flex: 1; background: #e0e0e0; }
.storage p { margin: 0 0 13px; line-height: 16px; }
.buy { height: 36px; border: 1px solid #dadce0; border-radius: 4px; padding: 0 23px; background: #fff; color: #1967d2; font-size: 15px; font-weight: 500; }

main { flex: 1; min-width: 0; }
.crumbs { height: 49px; display: flex; align-items: center; gap: 17px; border-bottom: 1px solid #dadce0; padding: 0 24px 1px 17px; font-size: 18px; }
.current { display: flex; align-items: center; gap: 11px; color: #3c4043; }
.view-actions { margin-left: auto; display: flex; align-items: center; gap: 27px; }
.section-head { height: 64px; display: flex; align-items: center; justify-content: space-between; padding: 0 92px 0 23px; }
.files-head { height: 63px; }
h2 { margin: 0; font-size: 13px; font-weight: 500; }
.sort { display: flex; align-items: center; gap: 13px; font-weight: 500; }
.grid { display: grid; grid-template-columns: repeat(6, minmax(0, 1fr)); gap: 14px; padding: 0 71px 0 8px; color: #3c4043; font-weight: 500; }
.folder, .file { border: 1px solid #dadce0; border-radius: 6px; }
.folder { height: 50px; display: flex; align-items: center; gap: 16px; padding: 0 16px; }
.file { aspect-ratio: 1; display: flex; flex-direction: column; }
.thumb { flex: 1; display: flex; align-items: center; justify-content: center; }
.name { height: 46px; display: flex; align-items: center; gap: 16px; padding: 0 10px 0 16px; }
.name span, .folder span { min-width: 0; overflow: hidden; white-space: nowrap; text-overflow: ellipsis; line-height: 18px; }

.companion { flex: 0 0 56px; display: flex; flex-direction: column; align-items: center; gap: 36px; border-left: 1px solid #dadce0; padding: 18px 0; }
.companion hr { width: 20px; height: 1px; margin: -2px 0; border: 0; background: #e0e0e0; }
.hide-panel { margin-top: auto; }
```
